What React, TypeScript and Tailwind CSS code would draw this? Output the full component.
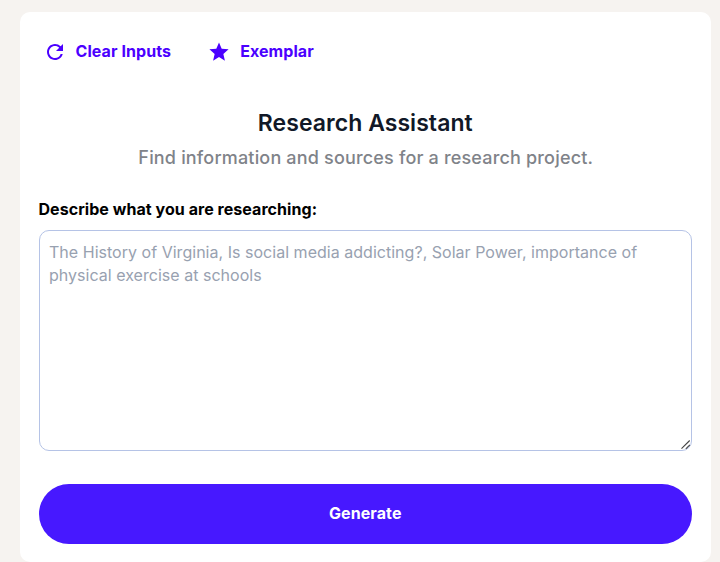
import React, { useState } from "react";
import { MdRefresh, MdStar } from "react-icons/md";

const EXEMPLAR = "The effects of screen time on sleep in teenagers";

interface ActionButtonProps {
    icon: React.ReactNode;
    label: string;
    onClick: () => void;
}

const ActionButton: React.FC<ActionButtonProps> = ({ icon, label, onClick }) => (
    <button
        type="button"
        onClick={onClick}
        className="flex h-8 cursor-pointer items-center gap-[9px] text-base font-bold tracking-[0.08px] whitespace-nowrap text-[#4b00ff]"
    >
        {icon}
        <span className="pb-0.5">{label}</span>
    </button>
);

const App: React.FC = () => {
    const [topic, setTopic] = useState("");

    return (
        <div className="h-[562px] w-[720px] overflow-hidden bg-[#f6f3f0] pt-3 pr-[9px] pl-5 font-['Inter',sans-serif]">
            <div className="h-[550px] rounded-[10px] bg-white pt-6 pr-[19px] pl-[18.5px]">
                <div className="flex gap-9 pl-1">
                    <ActionButton
                        icon={<MdRefresh className="size-6" />}
                        label="Clear Inputs"
                        onClick={() => setTopic("")}
                    />
                    <ActionButton
                        icon={<MdStar className="size-6 p-[0.5px]" />}
                        label="Exemplar"
                        onClick={() => setTopic(EXEMPLAR)}
                    />
                </div>

                <h1 className="mt-[39px] text-center text-[23px] leading-8 font-semibold tracking-[0.05px] text-[#111827]">
                    Research Assistant
                </h1>
                <p className="mt-[5px] pl-px text-center text-lg font-medium tracking-[0.175px] text-[#7f8389]">
                    Find information and sources for a research project.
                </p>

                <label
                    htmlFor="topic"
                    className="mt-[25px] block text-base font-bold tracking-[0.05px] text-black"
                >
                    Describe what you are researching:
                </label>
                <div className="relative mt-[9px] h-[221px]">
                    <textarea
                        id="topic"
                        value={topic}
                        onChange={(e) => setTopic(e.target.value)}
                        placeholder="The History of Virginia, Is social media addicting?, Solar Power, importance of physical exercise at schools"
                        className="block h-full w-full resize-none rounded-[10px] border border-[#b5c3e6] bg-white px-[9.5px] py-[10px] text-base leading-[23px] tracking-[0.025px] placeholder:text-[#98a1b0] focus:outline-none"
                    />
                    <svg
                        viewBox="0 0 10 10"
                        className="pointer-events-none absolute right-[1px] bottom-[1px] size-[10px]"
                        fill="none"
                        stroke="#444444"
                        strokeWidth="1.1"
                    >
                        <path d="M0.5 8.7 8.7 0.5M4.8 8.9 8.9 4.8" />
                    </svg>
                </div>

                <button
                    type="button"
                    className="mt-[33px] h-[60px] w-full cursor-pointer rounded-full bg-[#4718ff] pb-0.5 text-base font-bold tracking-[0.08px] text-white"
                >
                    Generate
                </button>
            </div>
        </div>
    );
};

export default App;
